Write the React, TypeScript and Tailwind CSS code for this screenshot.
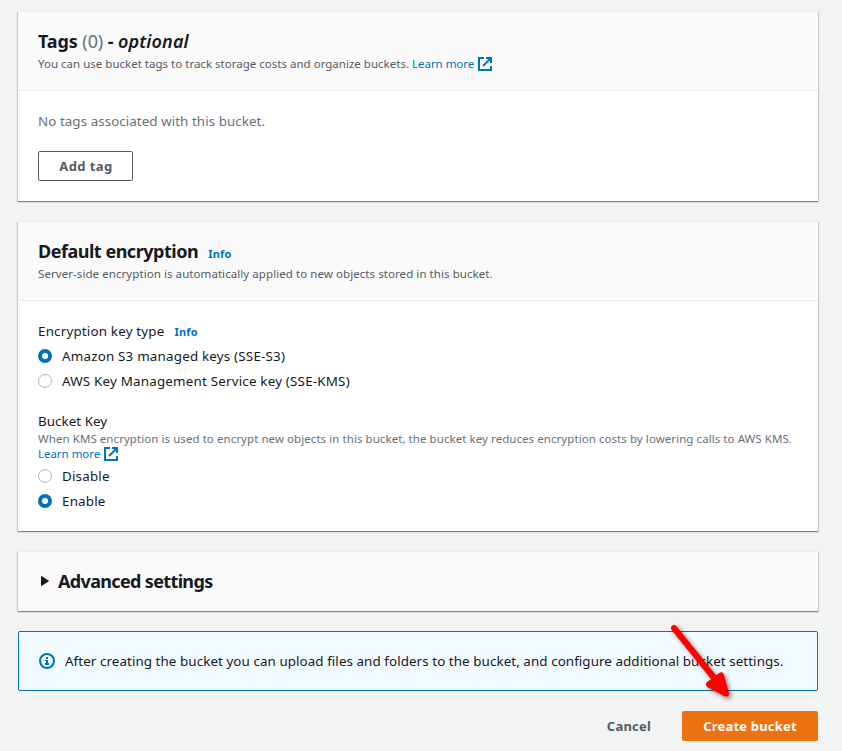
import React from "react";

const ExternalIcon = () => (
  <svg className="block h-[14px] w-[14px]" viewBox="0 0 14 14" fill="none" stroke="#0073bb" strokeWidth="2">
    <path d="M6 1H1V13H13V9" />
    <path d="M8 1H13V6M13 1L5 9" />
  </svg>
);

const LearnMore = () => (
  <a href="#" className="inline-flex h-[15px] items-center gap-[4px] align-top text-[#0073bb]">
    <span className="w-[62px] tracking-[-0.03px] whitespace-nowrap">Learn more</span>
    <ExternalIcon />
  </a>
);

const Info = () => (
  <a href="#" className="ml-[10px] text-[11px] font-bold tracking-[0.2px] text-[#0073bb]">
    Info
  </a>
);

const Card = ({ children }: { children: React.ReactNode }) => (
  <section className="mb-5 border-t border-[#eaeded] bg-white shadow-[0_1px_1px_0_rgba(0,28,36,0.3),1px_1px_1px_0_rgba(0,28,36,0.15),-1px_1px_1px_0_rgba(0,28,36,0.15)]">
    {children}
  </section>
);

const Radio = ({ label, checked }: { label: string; checked?: boolean }) => (
  <label className="mb-px flex h-[24px] items-center gap-[10px]">
    <input type="radio" className="sr-only" checked={!!checked} readOnly />
    <span
      className={
        checked
          ? "h-[14px] w-[14px] rounded-full border-[4px] border-[#0073bb] bg-white"
          : "h-[14px] w-[14px] rounded-full border border-[#aab7b8] bg-white"
      }
    />
    <span className="leading-5 tracking-[0.19px]">{label}</span>
  </label>
);

const App = () => {
  return (
    <div className="relative h-[751px] w-[842px] overflow-hidden bg-[#f2f3f3] pt-[11px] pr-6 pl-[18px] font-['Noto_Sans',sans-serif] text-[13.4px] text-[#16191f]">
      {/* Tags */}
      <Card>
        <div className="h-[79px] border-b border-[#eaeded] bg-[#fafafa] px-5 pt-[18px]">
          <h2 className="h-[22px] text-[18px] leading-[22px] font-bold tracking-[-0.1px]">
            Tags <span className="font-normal text-[#687078]">(0)</span> -{" "}
            <i className="font-semibold tracking-[0.15px]">optional</i>
          </h2>
          <p className="mt-[4px] h-[15px] text-[11.5px] leading-[15px] tracking-[0.012px] text-[#545b64]">
            You can use bucket tags to track storage costs and organize buckets. <LearnMore />
          </p>
        </div>
        <div className="h-[110px] px-5 pt-5">
          <p className="leading-5 tracking-[0.05px] text-[#687078]">No tags associated with this bucket.</p>
          <button className="mt-5 flex h-[30px] w-[95px] items-center justify-center rounded-[2px] border border-[#545b64] pt-px pl-px text-[13px] font-bold tracking-[0.4px] text-[#545b64]">
            Add tag
          </button>
        </div>
      </Card>

      {/* Encryption */}
      <Card>
        <div className="h-[79px] border-b border-[#eaeded] bg-[#fafafa] px-5 pt-[18px]">
          <h2 className="h-[22px] text-[18px] leading-[22px] font-bold tracking-[-0.48px]">
            Default encryption
            <Info />
          </h2>
          <p className="mt-[4px] text-[11.5px] leading-[15px] tracking-[0.07px] text-[#545b64]">
            Server-side encryption is automatically applied to new objects stored in this bucket.
          </p>
        </div>
        <div className="h-[230px] px-5 pt-5">
          <p className="mb-[3px] h-5 leading-5 tracking-[0.18px]">
            Encryption key type
            <Info />
          </p>
          <Radio label="Amazon S3 managed keys (SSE-S3)" checked />
          <Radio label="AWS Key Management Service key (SSE-KMS)" />
          <p className="mt-[18px] h-5 leading-5 tracking-[0.04px]">Bucket Key</p>
          <p className="h-[15px] text-[11.5px] leading-[15px] tracking-[0.065px] whitespace-nowrap text-[#687078]">
            When KMS encryption is used to encrypt new objects in this bucket, the bucket key reduces encryption costs by lowering calls to AWS KMS.
          </p>
          <div className="mb-[3px] h-[15px] text-[11.5px] leading-[15px]">
            <LearnMore />
          </div>
          <Radio label="Disable" />
          <Radio label="Enable" checked />
        </div>
      </Card>

      {/* Advanced settings */}
      <Card>
        <div className="flex h-[59px] items-center bg-[#fafafa] pl-[23px]">
          <svg className="mb-px h-[10px] w-[8px]" viewBox="0 0 8 10" fill="#16191f" stroke="#16191f" strokeLinejoin="round">
            <path d="M0.5 0.5L7.5 5L0.5 9.5Z" />
          </svg>
          <h2 className="ml-[9px] pb-px text-[18px] leading-[22px] font-bold tracking-[-0.65px]">Advanced settings</h2>
        </div>
      </Card>

      <div className="flex h-[60px] items-center rounded-[2px] border border-[#0073bb] bg-[#f1faff] pl-5">
        <svg className="h-4 w-4" viewBox="0 0 16 16">
          <circle cx="8" cy="8" r="7" fill="none" stroke="#0073bb" strokeWidth="2" />
          <path d="M7 4H9V6H7ZM6 7H9V10H10V12H6V10H7V8H6Z" fill="#0073bb" />
        </svg>
        <span className="ml-[10px] pt-px tracking-[0.068px] whitespace-nowrap">
          After creating the bucket you can upload files and folders to the bucket, and configure additional bucket settings.
        </span>
      </div>

      <div className="mt-5 flex h-[30px] items-center justify-end text-[13px] font-bold tracking-[0.2px]">
        <button className="mr-[31px] pt-[2px] text-[#545b64]">Cancel</button>
        <button className="flex h-[30px] w-[136px] items-center justify-center rounded-[2px] bg-[#ec7211] pt-[2px] text-white">
          Create bucket
        </button>
      </div>

      {/* Arrow pointing at the submit button */}
      <svg
        className="absolute top-[620px] left-[665px] h-[90px] w-[80px] drop-shadow-[2px_2px_2px_rgba(0,0,0,0.5)]"
        viewBox="0 0 80 90"
        fill="#ff0000"
        stroke="#ff0000"
        strokeLinecap="round"
        strokeLinejoin="round"
      >
        <path d="M9 8L50 59" strokeWidth="6" />
        <path d="M56 55.5L61 73.5L44 64.5Z" strokeWidth="6" />
      </svg>
    </div>
  );
};

export default App;
